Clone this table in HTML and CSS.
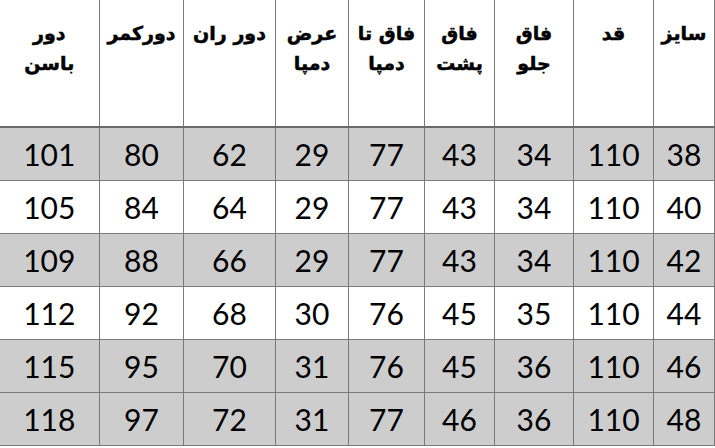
FILE: index.html
```html
<!DOCTYPE html>
<html lang="fa" dir="rtl">
<head>
<meta charset="utf-8">
<link rel="stylesheet" href="styles.css">
</head>
<body>
<table class="sizes">
  <colgroup>
    <col class="c-size"><col class="c-qad"><col class="c-jelo"><col class="c-posht"><col class="c-damp">
    <col class="c-arz"><col class="c-ran"><col class="c-kamar"><col class="c-basan">
  </colgroup>
  <thead>
    <tr>
      <th>سایز</th><th>قد</th><th>فاق<br>جلو</th><th>فاق<br>پشت</th><th>فاق تا<br>دمپا</th>
      <th>عرض<br>دمپا</th><th>دور ران</th><th>دورکمر</th><th>دور<br>باسن</th>
    </tr>
  </thead>
  <tbody>
    <tr class="shade"><td>38</td><td>110</td><td>34</td><td>43</td><td>77</td><td>29</td><td>62</td><td>80</td><td>101</td></tr>
    <tr><td>40</td><td>110</td><td>34</td><td>43</td><td>77</td><td>29</td><td>64</td><td>84</td><td>105</td></tr>
    <tr class="shade"><td>42</td><td>110</td><td>34</td><td>43</td><td>77</td><td>29</td><td>66</td><td>88</td><td>109</td></tr>
    <tr><td>44</td><td>110</td><td>35</td><td>45</td><td>76</td><td>30</td><td>68</td><td>92</td><td>112</td></tr>
    <tr class="shade"><td>46</td><td>110</td><td>36</td><td>45</td><td>76</td><td>31</td><td>70</td><td>95</td><td>115</td></tr>
    <tr class="shade"><td>48</td><td>110</td><td>36</td><td>46</td><td>77</td><td>31</td><td>72</td><td>97</td><td>118</td></tr>
  </tbody>
</table>
</body>
</html>
```
FILE: styles.css
```css
html, body {
  margin: 0;
  padding: 0;
  background: #ffffff;
}
.sizes {
  border-collapse: collapse;
  table-layout: fixed;
  width: 715px;
  direction: rtl;
}
.c-size { width: 61px; }
.c-qad { width: 80px; }
.c-jelo { width: 79px; }
.c-posht { width: 70px; }
.c-damp { width: 76px; }
.c-arz { width: 73px; }
.c-ran { width: 92px; }
.c-kamar { width: 84px; }
.c-basan { width: 100px; }

.sizes th, .sizes td {
  border: 1px solid #7a7a7a;
  padding: 0;
  text-align: center;
}
.sizes th:last-child, .sizes td:last-child {
  border-left: none;
}
.sizes thead th {
  border-top: none;
  border-bottom: 2px solid #6a6a6a;
  height: 127px;
  vertical-align: top;
  padding-top: 18px;
  box-sizing: border-box;
  font-family: "DejaVu Sans", sans-serif;
  font-weight: bold;
  font-size: 19px;
  line-height: 30px;
  color: #000;
  -webkit-text-stroke: 0.5px #000;
}
.sizes td {
  height: 52px;
  font-family: "Lato", "Open Sans", sans-serif;
  font-size: 30px;
  color: #000;
  vertical-align: middle;
}
.sizes tr.shade td {
  background: #cdcdcd;
}
```
